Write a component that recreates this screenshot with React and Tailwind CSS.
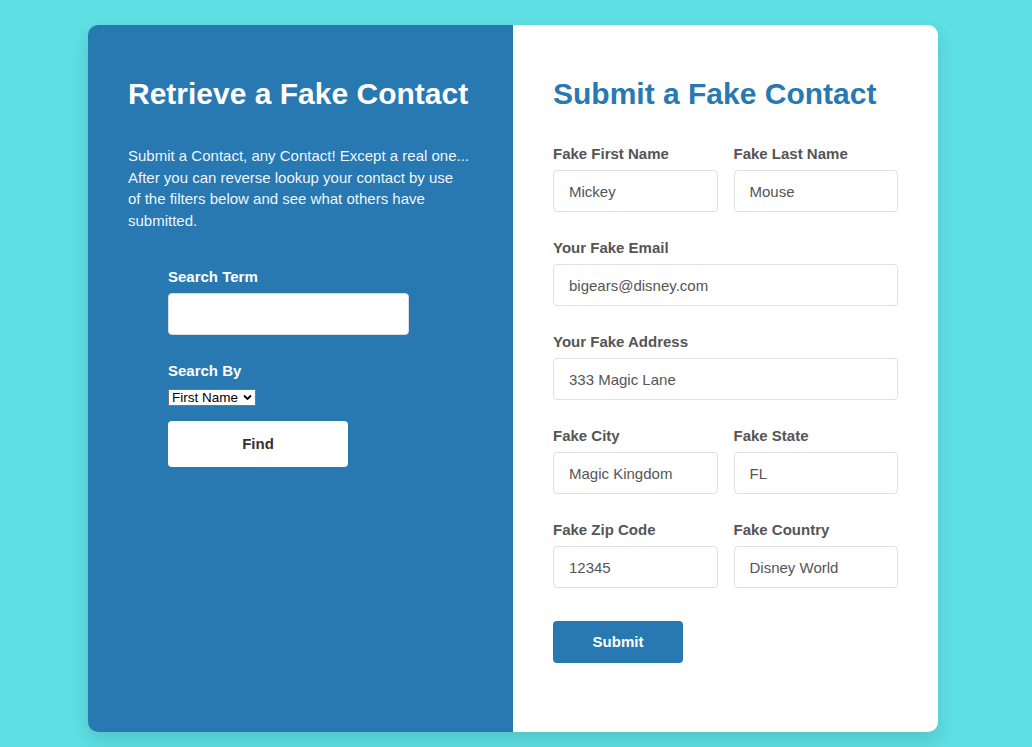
import React from "react";

const font = { fontFamily: '"Liberation Sans", Arial, Helvetica, sans-serif' };

function Field({ label, value }) {
  return (
    <div className="flex flex-col">
      <label className="mb-2 text-[15px] font-bold leading-4 text-[#555]">{label}</label>
      <input
        readOnly
        value={value}
        className="h-[42px] w-full rounded border border-[#e0e0e0] bg-white pl-[15px] text-[15px] text-[#555] outline-none"
      />
    </div>
  );
}

export default function App() {
  return (
    <div className="min-h-[747px] w-full bg-[#5ddfe3] pt-[25px]" style={font}>
      <div className="ml-[88px] flex h-[707px] w-[850px] overflow-hidden rounded-[10px] shadow-[0_8px_18px_rgba(0,0,0,0.12)]">
        {/* Left panel */}
        <div className="w-[425px] bg-[#2879b2] px-10 pt-[52px] text-white">
          <h2 className="text-[30px] font-bold leading-[34px]">Retrieve a Fake Contact</h2>
          <p className="mt-[34px] text-[15px] leading-[21.5px] text-white/95">
            Submit a Contact, any Contact! Except a real one... After you can reverse lookup your contact by use
            <br />
            of the filters below and see what others have submitted.
          </p>
          <div className="ml-10 mt-[38px] flex flex-col items-start">
            <label className="mb-2 text-[15px] font-bold leading-4">Search Term</label>
            <input className="h-[42px] w-[241px] rounded border border-[#ddd] bg-white outline-none" />
            <label className="mb-[10px] mt-[28px] text-[15px] font-bold leading-4">Search By</label>
            <div className="relative block h-[17px] w-[88px]">
              <select className="block h-[17px] w-[88px] appearance-none border border-[#767676] bg-white pl-[3px] text-[13.5px] leading-[15px] text-black outline-none">
                <option>First Name</option>
              </select>
              <svg className="pointer-events-none absolute right-[4px] top-[5px]" width="9" height="7" viewBox="0 0 9 7">
                <path d="M1 1.5 L4.5 5 L8 1.5" fill="none" stroke="black" strokeWidth="1.8" />
              </svg>
            </div>
            <button className="mt-[15px] h-[46px] w-[180px] rounded bg-white text-[15px] font-bold text-[#333]">Find</button>
          </div>
        </div>
        {/* Right panel */}
        <div className="flex-1 bg-white px-10 pt-[52px]">
          <h2 className="text-[30px] font-bold leading-[34px] text-[#2879b2]">Submit a Fake Contact</h2>
          <div className="mt-[35px] flex flex-col gap-[28px]">
            <div className="grid grid-cols-2 gap-4">
              <Field label="Fake First Name" value="Mickey" />
              <Field label="Fake Last Name" value="Mouse" />
            </div>
            <Field label="Your Fake Email" value="bigears@disney.com" />
            <Field label="Your Fake Address" value="333 Magic Lane" />
            <div className="grid grid-cols-2 gap-4">
              <Field label="Fake City" value="Magic Kingdom" />
              <Field label="Fake State" value="FL" />
            </div>
            <div className="grid grid-cols-2 gap-4">
              <Field label="Fake Zip Code" value="12345" />
              <Field label="Fake Country" value="Disney World" />
            </div>
          </div>
          <button className="mt-[33px] h-[42px] w-[130px] rounded bg-[#2879b2] text-[15px] font-bold text-white">Submit</button>
        </div>
      </div>
    </div>
  );
}
